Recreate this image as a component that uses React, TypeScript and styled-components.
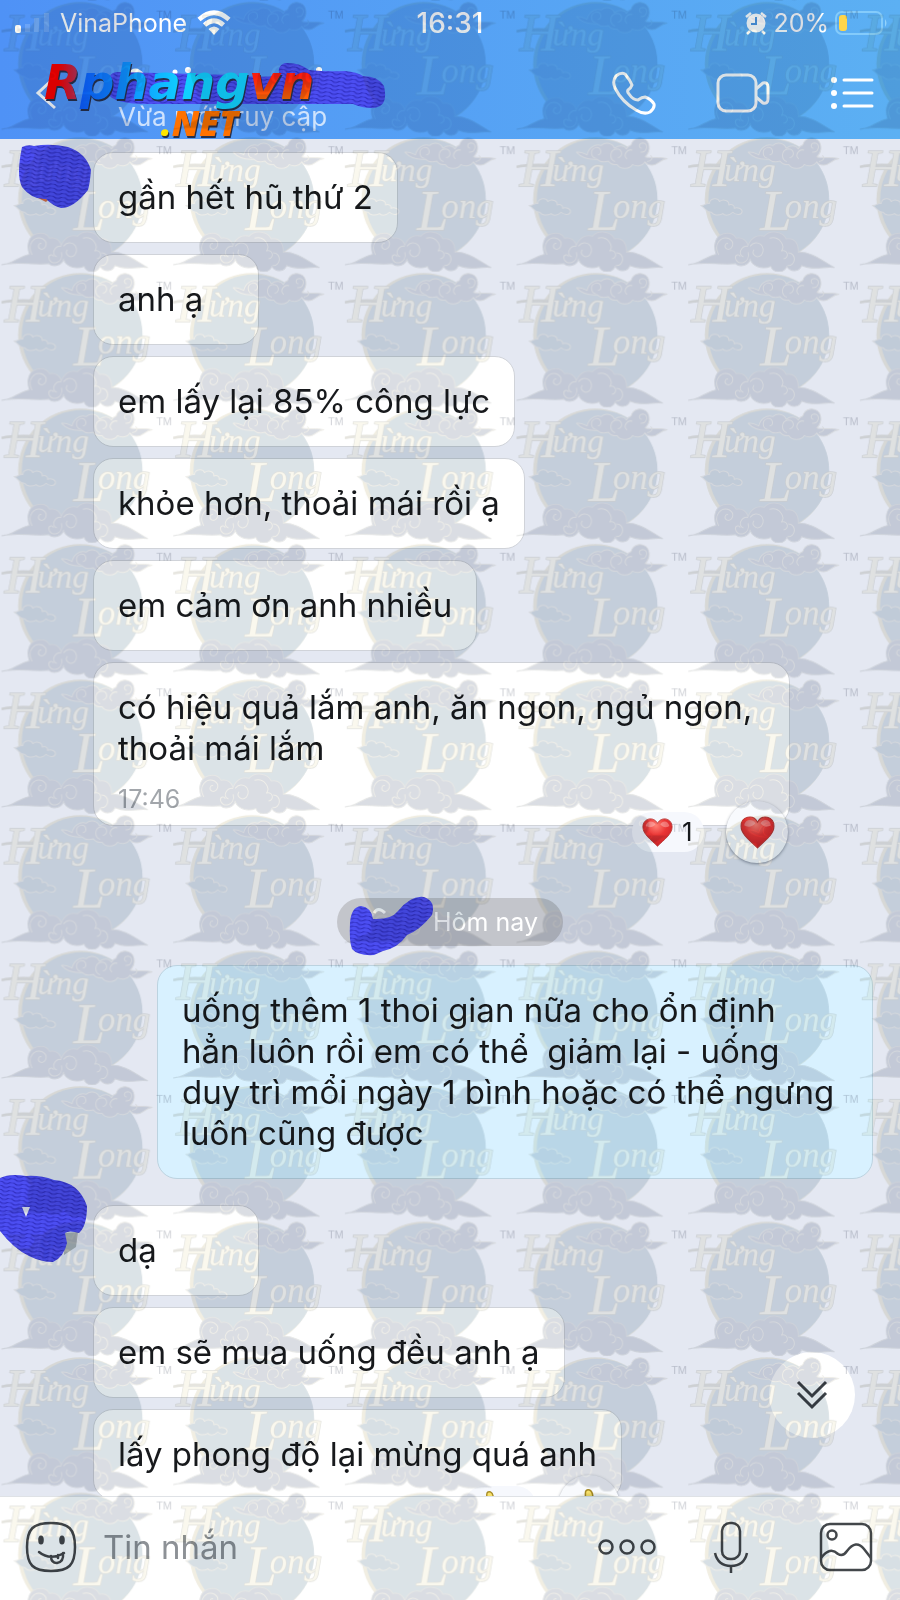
import React from "react";
import styled, { createGlobalStyle } from "styled-components";

const GlobalStyle = createGlobalStyle`
  *, *::before, *::after { box-sizing: border-box; }
  body { margin: 0; font-family: Inter, "Noto Sans", sans-serif; background: #e4e8f2; }
  button { border: 0; padding: 0; background: none; color: inherit; font: inherit; cursor: pointer; }
  svg { display: block; }
`;

const Page = styled.div`
  position: relative;
  height: 100vh;
  display: flex;
  flex-direction: column;
  overflow: hidden;
`;

const Header = styled.header`
  position: relative;
  flex: none;
  height: 139px;
  color: #fff;
  background: linear-gradient(90deg, #4f92f6, #5cb0f3);
`;

const StatusBar = styled.div`
  display: grid;
  grid-template-columns: 1fr auto 1fr;
  align-items: center;
  height: 46px;
  padding: 0 12px;
  font-size: 25px;
  line-height: 30px;
`;

const StatusSide = styled.div<{ $end?: boolean }>`
  display: flex;
  align-items: center;
  gap: ${(p) => (p.$end ? 6 : 10)}px;
  justify-content: ${(p) => (p.$end ? "flex-end" : "flex-start")};
`;

const Clock = styled.time`
  font-size: 28px;
  font-weight: 500;
`;

const NavBar = styled.div`
  display: flex;
  align-items: center;
  height: 93px;
  padding: 0 26px 0 34px;
`;

const IconButton = styled.button`
  display: grid;
  place-items: center;
  flex: none;
`;

const Contact = styled.div`
  flex: 1;
  min-width: 0;
  padding-left: 60px;
`;

const Presence = styled.p`
  margin: 0;
  color: rgba(255, 255, 255, 0.72);
  font-size: 26px;
  line-height: 30px;
  white-space: nowrap;
`;

const Actions = styled.div`
  display: flex;
  align-items: center;
  gap: 60px;
`;

const SiteLogo = styled.svg`
  position: absolute;
  left: 40px;
  top: 50px;
  overflow: visible;
`;

const Chat = styled.main`
  flex: 1;
  min-height: 0;
  overflow: hidden;
  display: flex;
  flex-direction: column;
  padding: 13px 27px 0 0;
`;

const Group = styled.section`
  flex: none;
  display: grid;
  grid-template-columns: 93px 1fr;
`;

const Scribble = styled.svg`
  overflow: visible;
`;

const Stack = styled.div`
  display: flex;
  flex-direction: column;
  align-items: flex-start;
  gap: 11px;
`;

const Bubble = styled.article<{ $own?: boolean; $timed?: boolean }>`
  position: relative;
  flex: none;
  width: ${(p) => (p.$own ? "100%" : "auto")};
  min-width: 166px;
  max-width: ${(p) => (p.$own ? 716 : 697)}px;
  padding: ${(p) => (p.$timed ? "24px 24px 12px" : "24px")};
  border: 1px solid ${(p) => (p.$own ? "#bcd3e0" : "#d0d3d9")};
  border-radius: 20px;
  background: ${(p) => (p.$own ? "#d8f1ff" : "#fff")};
  color: #17191c;
  font-size: 33px;
  line-height: 41px;
  white-space: pre-wrap;
`;

const SentAt = styled.time`
  display: block;
  margin-top: 16px;
  color: #a2a6ab;
  font-size: 25px;
  line-height: 28px;
`;

const Reactions = styled.div`
  position: absolute;
  right: 1px;
  bottom: -38px;
  display: flex;
  align-items: center;
  gap: 22px;
`;

const ReactionCount = styled.span`
  display: flex;
  align-items: center;
  gap: 9px;
  min-width: 72px;
  height: 40px;
  padding: 0 10px;
  border-radius: 20px;
  background: #f6f8fd;
  font-size: 26px;
  line-height: 40px;
`;

const ReactButton = styled.button`
  display: grid;
  place-items: center;
  width: 62px;
  height: 62px;
  border-radius: 50%;
  background: #f8fafd;
  box-shadow: 0 1px 3px rgba(40, 50, 70, 0.5);
`;

const DayMark = styled.div`
  flex: none;
  align-self: center;
  display: flex;
  align-items: center;
  justify-content: space-between;
  width: 226px;
  height: 48px;
  margin: 72px 0 19px 27px;
  padding: 0 25px 0 13px;
  border-radius: 24px;
  background: #c3c5cb;
  color: #fff;
  font-size: 25px;
`;

const OwnRow = styled.section`
  flex: none;
  display: flex;
  justify-content: flex-end;
  margin-bottom: 26px;
`;

const JumpButton = styled.button`
  position: absolute;
  right: 45px;
  bottom: 162px;
  display: grid;
  place-items: center;
  width: 86px;
  height: 86px;
  border-radius: 50%;
  background: #fff;
`;

const Composer = styled.form`
  flex: none;
  display: flex;
  align-items: center;
  height: 104px;
  padding: 0 27px 3px 25px;
  border-top: 1px solid #dfe2e6;
  background: #fff;
  color: #43474b;
`;

const MessageInput = styled.input`
  flex: 1;
  min-width: 0;
  margin-left: 26px;
  padding: 0;
  border: 0;
  outline: 0;
  background: transparent;
  font: 33px/41px Inter, "Noto Sans", sans-serif;
  &::placeholder { color: #8d9196; opacity: 1; }
`;

const Tools = styled.div`
  display: flex;
  align-items: center;
  gap: 56px;
  & > :last-child { margin-left: 14px; }
`;

const Overlay = styled.svg`
  position: absolute;
  inset: 0;
  width: 100%;
  height: 100%;
  pointer-events: none;
  mix-blend-mode: multiply;
`;

function Watermark() {
  return (
    <Overlay aria-hidden="true">
      <defs>
        <pattern id="brand" width="515" height="406.6" patternUnits="userSpaceOnUse" patternTransform="translate(1.5 .7) scale(.33333)">
          <circle cx="236" cy="190" r="186" fill="#f1eee2" />
          <circle cx="242" cy="189" r="181" fill="#dbe3e7" />
          <g fill="#dadde3" stroke="#efeee9" strokeWidth="3" strokeLinejoin="round">
            <path d="M180 48c20-2 25 6 32 8 4-20 22-34 42-28 14-12 34-8 40 8 14-10 30-8 36 2 4-8 8-10 14-12 6-28 50-28 54 4 2 16-4 24-12 32 22 6 36-2 66 5-24 4-28 20-46 20-10 0-16-4-20-10-8 12-24 16-38 8-8 14-36 16-46 0-14 2-20-2-26-10-14 4-26 2-34-6-24 2-44-2-62-21z" />
            <path d="M238 66c-14-2-20-26 0-32 18-2 20 22 6 22M296 76c-16-4-20-34 4-38 20 0 20 26 4 26M332 68c-14-10 0-32 16-26M372 48c20 2 26-26 8-28-14 0-14 16-4 16M392 76c14-2 20-12 10-18" fill="none" />
            <path d="M38 208c14 0 14-8 26-6 2-18 26-18 30-6 12-10 30-2 28 10 12-4 18 4 16 10 10-4 24 0 24 10-2 14-22 8-28 2-12 12-26 10-30 4-14 8-30 4-34-4-14 2-18-12-32-20z" fill="#d7dfe4" />
            <path d="M0 386c38-4 44-22 84-32-8-22-6-54 22-62 18-4 32 2 38 14 18-4 32 6 36 22 8-24 28-34 48-28 18-20 56-16 66 8 24-6 38 14 36 40 38-2 70 24 108 46-32-4-62 10-98-6-6 20-34 20-44 2-8 22-40 22-48 0-26 12-56 0-62-22-4 20-30 26-44 14-40 6-98-8-142 4z" stroke="#e6e7e6" />
            <path d="M92 356c-18-32 8-60 32-48 20 12 6 36-8 30-10-6-4-18 4-16M180 330c-20-2-34 24-14 32M186 330c20-26 52 2 34 26-16 14-32-4-22-16M180 348c8 34-34 42-38 18-2-12 14-14 14-4M244 306c30-8 48 22 36 38 20-6 24 22 6 24M300 350c26 0 24 40-2 38" fill="none" />
          </g>
          <g fontFamily="Liberation Serif" fontStyle="italic" fill="#faf8ee" stroke="#e2e2dd" strokeWidth="4" paintOrder="stroke">
            <path d="M0 92Q34 84 98 87" fill="none" stroke="#e6e5df" strokeWidth="8" />
            <text x="10" y="150" fontSize="160">H</text>
            <text x="108" y="134" fontSize="100">ừng</text>
            <text x="216" y="280" fontSize="170">L</text>
            <text x="290" y="246" fontSize="104">ong</text>
          </g>
          <text x="465" y="53" fontFamily="Liberation Sans" fontSize="32" fill="#cfd1d6">TM</text>
        </pattern>
      </defs>
      <rect width="100%" height="100%" fill="url(#brand)" />
    </Overlay>
  );
}

function InkDefs() {
  return (
    <svg width="0" height="0" style={{ position: "absolute" }} aria-hidden="true">
      <defs>
        <pattern id="ink" width="12" height="4" patternUnits="userSpaceOnUse" patternTransform="rotate(8)">
          <rect width="12" height="4" fill="#4c4ef2" />
          <path d="M0 1q3 2 6 0t6 0" fill="none" stroke="#2f2dbe" strokeWidth="1.2" />
        </pattern>
        <radialGradient id="heart" cx=".45" cy=".25" r=".8">
          <stop offset="0" stopColor="#ff8074" />
          <stop offset=".45" stopColor="#ea3434" />
          <stop offset="1" stopColor="#c51f26" />
        </radialGradient>
      </defs>
    </svg>
  );
}

const Heart = ({ size }: { size: number }) => (
  <svg width={size} height={size} viewBox="0 0 34 34" aria-hidden="true">
    <path d="M17 32C10 25 1 19 1 11 1 1 13-1 17 7 21-1 33 1 33 11c0 8-9 14-16 21z" fill="url(#heart)" stroke="#b93734" strokeWidth="1" />
    <path d="M4 10c1-6 8-7 11-2-3 4-8 4-11 2zM20 8c3-5 9-4 10 2-3 2-7 2-10-2z" fill="#fff" opacity=".3" />
  </svg>
);

const Clap = ({ size }: { size: number }) => (
  <svg width={size} height={size} viewBox="0 0 34 34" aria-hidden="true">
    <path d="M14 12V4q0-4 4-3 4 2 3 10l7 2q4 8-1 15-8 6-17 1-5-8 0-14z" fill="#f7e16c" stroke="#a58a24" strokeWidth="1.500" />
  </svg>
);

function App() {
  return (
    <Page>
      <GlobalStyle />
      <InkDefs />
      <Header>
        <StatusBar>
          <StatusSide>
            <svg width="38" height="24" viewBox="0 0 38 24" aria-hidden="true">
              <rect x="3" y="14" width="6" height="8" rx="2" fill="#fff" />
              <path d="M13 21v-8h5v8zM22 21V7h5v14zM32 21V2h5v19z" fill="#fff" opacity=".16" />
            </svg>
            <span>VinaPhone</span>
            <svg width="34" height="26" viewBox="0 0 34 26" fill="none" stroke="#fff" strokeWidth="4.6" aria-hidden="true">
              <path d="M2 9.500Q17-4 32 9.500M7.500 15Q17 6.500 26.500 15" />
              <path d="M11.500 19q5.500-5 11 0L17 25z" fill="#fff" stroke="none" />
            </svg>
          </StatusSide>
          <Clock>16:31</Clock>
          <StatusSide $end>
            <svg width="22" height="24" viewBox="0 0 22 24" aria-hidden="true">
              <circle cx="11" cy="12" r="9.500" fill="#fff" />
              <path d="M1 6l5-4M21 6l-5-4M5 20l-3 3M17 20l3 3" stroke="#fff" strokeWidth="2.500" />
              <path d="M11 6v7H6" fill="none" stroke="#4c97e0" strokeWidth="2" />
            </svg>
            <span>20%</span>
            <svg width="53" height="26" viewBox="0 0 53 26" aria-hidden="true">
              <rect x="1" y="2" width="46" height="22" rx="6" fill="none" stroke="#84cbfb" strokeWidth="2" />
              <rect x="4" y="5" width="8" height="16" rx="3" fill="#ffd54a" />
              <path d="M50 9q3 4 0 8z" fill="#93d2fb" />
            </svg>
          </StatusSide>
        </StatusBar>
        <NavBar>
          <IconButton aria-label="Quay lại">
            <svg width="24" height="36" viewBox="0 0 24 36" fill="none" stroke="#fff" strokeWidth="3">
              <path d="M20 3L4 18l17 15" />
            </svg>
          </IconButton>
          <Contact>
            <Scribble width="270" height="48" viewBox="0 0 270 48" aria-hidden="true">
              <g fill="#fff">
                <path d="M8 20q10-11 18 0z" />
                <circle cx="57" cy="18" r="2.500" /><circle cx="70" cy="16" r="3" /><circle cx="201" cy="16" r="3" />
              </g>
              <path d="M-8 22q2-4 8-4l114 3q22 3 48 1-4-10 5-13 14-1 24 7 18 2 36 1 12 1 18 5 15 0 21 10 5 22-12 22-10 0-19-4H30Q-4 50-10 40z" fill="url(#ink)" />
            </Scribble>
            <Presence>Vừa mới truy cập</Presence>
          </Contact>
          <Actions>
            <IconButton aria-label="Gọi thoại">
              <svg width="44" height="44" viewBox="0 0 44 44" fill="none" stroke="#fff" strokeWidth="3" strokeLinejoin="round">
                <path d="M4 5q5-4 9-2 5 6 7 11-1 3-4 5-1 2 1 4 4 6 9 6 4-3 7-3 6 2 9 7 1 4-4 8-6 3-14-2Q10 31 3 17q-3-7 1-12z" />
              </svg>
            </IconButton>
            <IconButton aria-label="Gọi video">
              <svg width="54" height="40" viewBox="0 0 54 40" fill="none" stroke="#fff" strokeWidth="3" strokeLinejoin="round">
                <rect x="2" y="2" width="38" height="36" rx="8" />
                <path d="M40 16l7-6q5-1 5 4v12q0 5-5 4l-7-6" />
              </svg>
            </IconButton>
            <IconButton aria-label="Tùy chọn">
              <svg width="44" height="36" viewBox="0 0 44 36">
                <g fill="#fff"><circle cx="4" cy="5" r="3" /><circle cx="4" cy="18" r="3" /><circle cx="4" cy="31" r="3" /></g>
                <path d="M14 5h28M14 18h28M14 31h28" stroke="#fff" strokeWidth="3" strokeLinecap="round" />
              </svg>
            </IconButton>
          </Actions>
        </NavBar>
        <SiteLogo width="280" height="90" viewBox="0 0 280 90">
          <defs>
            <linearGradient id="blue" x1="0" x2="1">
              <stop offset="0" stopColor="#0b5cff" />
              <stop offset=".6" stopColor="#10cfff" />
              <stop offset="1" stopColor="#12d5ff" />
            </linearGradient>
            <linearGradient id="red" x1="0" x2="1"><stop offset=".4" stopColor="#ff0000" /><stop offset="1" stopColor="#a83a6a" /></linearGradient>
            <linearGradient id="warm" x1="0" x2="0" y1="0" y2="1"><stop offset=".4" stopColor="#ff1e10" /><stop offset="1" stopColor="#ff8a00" /></linearGradient>
          </defs>
          <g fontFamily="DejaVu Sans" fontWeight="700" fontStyle="italic" fontSize="48" style={{ filter: "drop-shadow(1px 2px 0 #26304d)" }}>
            <text x="4" y="49" fill="url(#red)">R</text>
            <text x="40" y="49" fill="url(#blue)">phang</text>
            <text x="209" y="49" fill="url(#warm)">vn</text>
          </g>
          <g fontFamily="Open Sans" fontWeight="800" fontStyle="italic" fontSize="35" style={{ filter: "drop-shadow(1px 2px 0 #26304d)" }}>
            <text x="121" y="86" fill="#ff7200"><tspan fill="#ffe600">.</tspan>NET</text>
          </g>
        </SiteLogo>
      </Header>

      <Chat>
        <Group>
          <Scribble width="93" height="91" viewBox="0 0 93 91" aria-hidden="true">
            <path d="M38 46l8 4 6-6z" fill="#d9704a" />
            <path d="M22-5q6-3 12-1 16-3 34 1 18 6 23 23-1 13-3 20-14 18-27 18-8-2-15-9-14 1-24-12-6-12 0-40z" fill="url(#ink)" />
          </Scribble>
          <Stack>
            <Bubble>gần hết hũ thứ 2</Bubble>
            <Bubble>anh ạ</Bubble>
            <Bubble>em lấy lại 85% công lực</Bubble>
            <Bubble>khỏe hơn, thoải mái rồi ạ</Bubble>
            <Bubble>em cảm ơn anh nhiều</Bubble>
            <Bubble $timed>
              có hiệu quả lắm anh, ăn ngon, ngủ ngon, thoải mái lắm
              <SentAt>17:46</SentAt>
              <Reactions>
                <ReactionCount><Heart size={31} />1</ReactionCount>
                <ReactButton aria-label="Thả tim"><Heart size={35} /></ReactButton>
              </Reactions>
            </Bubble>
          </Stack>
        </Group>

        <DayMark>
          <Scribble width="83" height="58" viewBox="0 0 83 58" aria-hidden="true">
            <path d="M24 20q4-7 11 0" fill="none" stroke="#fff" strokeWidth="3" />
            <path d="M0 30q1-16 11-17 10 1 12 13 18 1 25-8Q61 2 74 4q12 4 8 18-12 15-25 20-9 13-24 16l-9 4Q8 63 2 56-1 48 0 30z" fill="url(#ink)" />
          </Scribble>
          <span>Hôm nay</span>
        </DayMark>

        <OwnRow>
          <Bubble $own>
            {"uống thêm 1 thoi gian nữa cho ổn định\nhẳn luôn rồi em có thể  giảm lại - uống\nduy trì mổi ngày 1 bình hoặc có thể ngưng\nluôn cũng được"}
          </Bubble>
        </OwnRow>

        <Group>
          <Scribble width="93" height="91" viewBox="0 0 93 91" aria-hidden="true">
            <path d="M64 28l14-1-2 15-12 8z" fill="#a9b0b4" />
            <path d="M0-27q10-5 26-2 14-1 28 4 25 2 33 26 0 20-8 27-10-3-14 0l2 10q-3 14-14 19-12 0-24-6Q14 44 0 26zM22 2l4 10 4-10z" fillRule="evenodd" fill="url(#ink)" />
          </Scribble>
          <Stack>
            <Bubble>dạ</Bubble>
            <Bubble>em sẽ mua uống đều anh ạ</Bubble>
            <Bubble>
              lấy phong độ lại mừng quá anh
              <Reactions>
                <ReactionCount><Clap size={31} /></ReactionCount>
                <ReactButton aria-label="Vỗ tay"><Clap size={35} /></ReactButton>
              </Reactions>
            </Bubble>
          </Stack>
        </Group>
      </Chat>

      <JumpButton aria-label="Xuống cuối">
        <svg width="32" height="30" viewBox="0 0 32 30" fill="none" stroke="#3c4147" strokeWidth="3">
          <path d="M2 2l14 14L30 2M2 13l14 14 14-14" />
        </svg>
      </JumpButton>

      <Composer onSubmit={(e) => e.preventDefault()}>
        <IconButton type="button" aria-label="Biểu cảm">
          <svg width="52" height="52" viewBox="0 0 52 52" fill="none" stroke="currentColor" strokeWidth="2.500">
            <path d="M26 2c18 0 24 6 24 24s-6 24-24 24S2 44 2 26 8 2 26 2z" />
            <g fill="currentColor" stroke="none"><ellipse cx="16" cy="19" rx="2.800" ry="4.500" /><ellipse cx="37" cy="19" rx="2.800" ry="4.500" /></g>
            <path d="M14 31q11 9 25 1M26 35q0 7 6 7 7-1 6-10M33 34v3" strokeLinecap="round" />
          </svg>
        </IconButton>
        <MessageInput aria-label="Tin nhắn" placeholder="Tin nhắn" />
        <Tools>
          <IconButton type="button" aria-label="Thêm">
            <svg width="60" height="20" viewBox="0 0 60 20" fill="none" stroke="currentColor" strokeWidth="2.500">
              <circle cx="9" cy="10" r="6.500" /><circle cx="30" cy="10" r="6.500" /><circle cx="51" cy="10" r="6.500" />
            </svg>
          </IconButton>
          <IconButton type="button" aria-label="Ghi âm">
            <svg width="36" height="52" viewBox="0 0 36 52" fill="none" stroke="currentColor" strokeWidth="2.500">
              <rect x="9" y="2" width="18" height="36" rx="8" />
              <path d="M2 32q3 13 16 13t16-13M18 45v7" />
            </svg>
          </IconButton>
          <IconButton type="button" aria-label="Gửi ảnh">
            <svg width="54" height="50" viewBox="0 0 54 50" fill="none" stroke="currentColor" strokeWidth="2.500">
              <rect x="2" y="2" width="50" height="46" rx="9" />
              <circle cx="13" cy="13" r="4.500" />
              <path d="M2 36q9-12 17-4 5 3 9-3 9-12 17-2l7 9" />
            </svg>
          </IconButton>
        </Tools>
      </Composer>
      <Watermark />
    </Page>
  );
}

export default App;
